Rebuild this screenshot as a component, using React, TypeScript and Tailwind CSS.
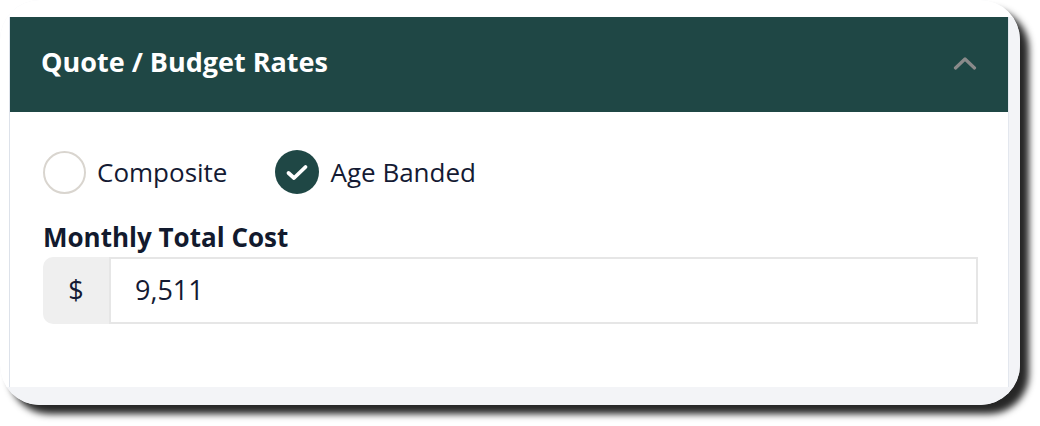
import React from 'react';

const font = { fontFamily: '"Open Sans", "Noto Sans", sans-serif' };

const RadioOption: React.FC<{ label: string; checked?: boolean }> = ({ label, checked }) => (
  <div className="flex items-center gap-[11px]">
    {checked ? (
      <span className="flex h-[44px] w-[44px] items-center justify-center rounded-full bg-[#1f4745]">
        <svg width="24" height="19" viewBox="0 0 24 19" fill="none">
          <path d="M3.5 10 L9 15 L20.5 4" stroke="#ffffff" strokeWidth="3.8" strokeLinecap="round" strokeLinejoin="round" />
        </svg>
      </span>
    ) : (
      <span className="block h-[43px] w-[43px] rounded-full border-2 border-[#d9d5cf] bg-white" />
    )}
    <span className="text-[26px] leading-[30px] text-[#141a33]">{label}</span>
  </div>
);

export default function App() {
  return (
    <div className="bg-white w-[1040px] h-[426px]" style={font}>
      <div className="flex h-[405px] w-[1020px] flex-col overflow-hidden rounded-[40px] bg-[#f3f4f7] shadow-[9px_9px_7px_rgba(0,0,0,0.85)]">
        <div className="h-[17px] shrink-0 bg-white" />
        <div className="flex h-[370px] shrink-0">
          <div className="w-[9px] bg-white" />
          <div className="w-px bg-[#dde2ea]" />
          <div className="w-[998px] bg-white">
            <div className="flex h-[95px] items-center justify-between bg-[#1f4745] pl-[31px] pr-[31px]">
              <h2 className="-mt-[5px] text-[27px] font-bold text-white">Quote / Budget Rates</h2>
              <svg className="-mt-[4px]" width="24" height="14" viewBox="0 0 24 14" fill="none">
                <path d="M2.5 12 L12 3 L21.5 12" stroke="#8a8a8a" strokeWidth="3.2" strokeLinecap="round" strokeLinejoin="round" />
              </svg>
            </div>
            <div className="pl-[33px] pr-[31px] pt-[38px]">
              <div className="flex items-center gap-[48px]">
                <RadioOption label="Composite" />
                <RadioOption label="Age Banded" checked />
              </div>
              <div className="mt-[28px] text-[26px] font-bold leading-[30px] text-[#121a2e]">Monthly Total Cost</div>
              <div className="mt-[5px] flex h-[67px] w-[935px]">
                <div className="flex w-[66px] items-center justify-center rounded-l-[10px] bg-[#efefef] text-[27px] text-[#141a33]">$</div>
                <div className="flex flex-1 items-center border-2 border-[#e6e6e6] pl-[24px] text-[27px] text-[#141a33]">9,511</div>
              </div>
            </div>
          </div>
          <div className="w-px bg-[#e3e7ee]" />
          <div className="flex-1 bg-[#f3f4f7]" />
        </div>
        <div className="flex-1 bg-[#f3f4f7]" />
      </div>
    </div>
  );
}
